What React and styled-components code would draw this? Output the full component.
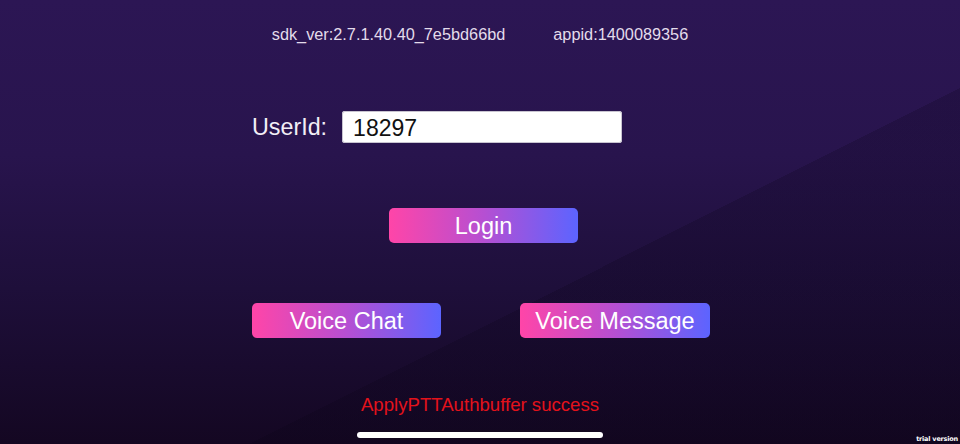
import React from "react";
import styled, { createGlobalStyle } from "styled-components";

const GlobalStyle = createGlobalStyle`
  html, body {
    margin: 0;
    padding: 0;
    background: #1a0b30;
  }
  body {
    font-family: "Liberation Sans", Arial, sans-serif;
  }
`;

const Screen = styled.div`
  position: relative;
  width: 960px;
  height: 444px;
  overflow: hidden;
  display: flex;
  flex-direction: column;
  align-items: center;
  background:
    linear-gradient(153.4deg, rgba(0, 0, 0, 0) 61.5%, rgba(8, 2, 20, 0.2) 61.5%),
    linear-gradient(180deg, #2c1654 0%, #28144d 35%, #1e0f3a 65%, #140722 100%);
`;

const InfoBar = styled.div`
  margin-top: 24px;
  display: flex;
  gap: 48px;
  font-size: 16.3px;
  line-height: 20px;
  color: #e3dceb;
`;

const Content = styled.div`
  width: 458px;
  margin-left: 2px;
  display: flex;
  flex-direction: column;
  align-items: flex-start;
`;

const UserRow = styled.div`
  margin-top: 67px;
  display: flex;
  align-items: center;
`;

const Label = styled.span`
  font-size: 23.3px;
  color: #f2eef6;
  margin-right: 15px;
  padding-top: 1px;
`;

const Field = styled.div`
  width: 280px;
  height: 32px;
  padding-left: 11px;
  padding-top: 2px;
  box-sizing: border-box;
  background: #ffffff;
  border-radius: 3px;
  box-shadow: 0 0 0 1px #c8c4d0 inset;
  display: flex;
  align-items: center;
  font-size: 23px;
  color: #111111;
`;

const GradientButton = styled.div`
  width: ${(p) => p.w || 189}px;
  height: 35px;
  box-sizing: border-box;
  padding-top: 2px;
  margin-left: ${(p) => p.offset || 0}px;
  border-radius: 5px;
  background: linear-gradient(90deg, #ff45a8 0%, #b64fd2 50%, #5c64ff 100%);
  display: flex;
  align-items: center;
  justify-content: center;
  font-size: 23.5px;
  color: #ffffff;
`;

const LoginWrap = styled.div`
  margin-top: 65px;
`;

const ActionRow = styled.div`
  margin-top: 60px;
  width: 100%;
  display: flex;
  justify-content: space-between;
`;

const Status = styled.div`
  margin-top: 56px;
  font-size: 18.6px;
  line-height: 22px;
  color: #e3121b;
`;

const HomeBar = styled.div`
  margin-top: 16px;
  width: 246px;
  height: 6px;
  border-radius: 3px;
  background: #ffffff;
`;

const Watermark = styled.div`
  position: absolute;
  right: 2px;
  bottom: 1px;
  font-family: "DejaVu Sans", sans-serif;
  font-weight: bold;
  font-size: 6.5px;
  letter-spacing: -0.2px;
  color: #ffffff;
`;

export default function App() {
  return (
    <Screen>
      <GlobalStyle />
      <InfoBar>
        <span>sdk_ver:2.7.1.40.40_7e5bd66bd</span>
        <span>appid:1400089356</span>
      </InfoBar>
      <Content>
        <UserRow>
          <Label>UserId:</Label>
          <Field>18297</Field>
        </UserRow>
        <LoginWrap>
          <GradientButton offset={137}>Login</GradientButton>
        </LoginWrap>
        <ActionRow>
          <GradientButton>Voice Chat</GradientButton>
          <GradientButton w={190}>Voice Message</GradientButton>
        </ActionRow>
      </Content>
      <Status>ApplyPTTAuthbuffer success</Status>
      <HomeBar />
      <Watermark>trial version</Watermark>
    </Screen>
  );
}
